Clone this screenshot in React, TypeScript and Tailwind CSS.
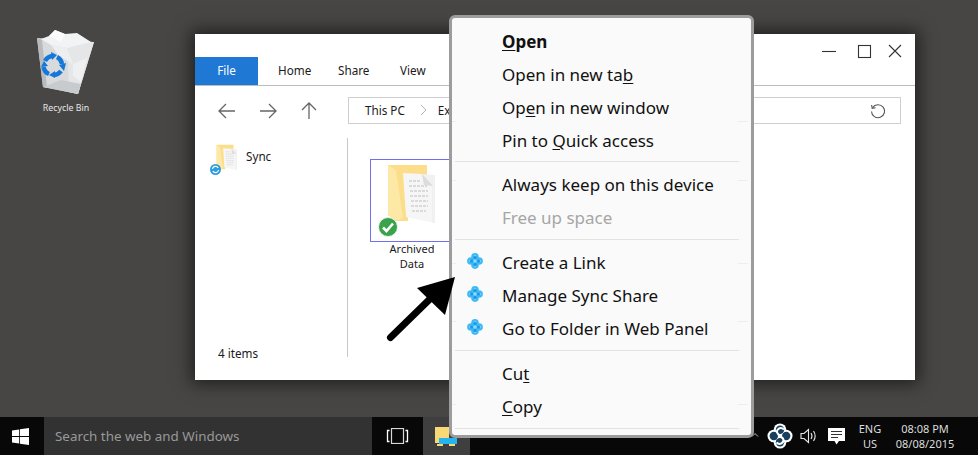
import type { ReactNode } from "react";

const font = "font-['Noto_Sans','Open_Sans',sans-serif]";

function RecycleBin() {
  return (
    <svg width="62" height="68" viewBox="0 0 62 68">
      <path d="M2 8 L59 12 L43 64 L8 57 Z" fill="#d8dadc" />
      <path d="M32 12 L59 12 L43 64 L34 62 Z" fill="#e4e6e7" />
      <path d="M6 9 L14 6 L20 0 L30 4 L42 3 L56 12 L32 18 L16 15 Z" fill="#f2f3f4" />
      <path d="M20 0 L30 4 L26 12 L14 6 Z" fill="#fbfbfb" />
      <path d="M16 15 L32 18 L38 34 L24 26 Z" fill="#eceeef" />
      <path d="M38 34 L52 28 L46 52 L38 46 Z" fill="#eff0f1" />
      <path d="M2 8 L8 57 L12 58 L7 10 Z" fill="#b7bbbe" />
      <path d="M8 57 L43 64 L46 54 L26 50 Z" fill="#c8cbcd" />
      <g fill="none" stroke="#1478d8" strokeWidth="4.4">
        <path d="M10 31 A 9.5 9.5 0 0 1 18 26" />
        <path d="M22 27 A 9.5 9.5 0 0 1 27 34" />
        <path d="M26 41 A 9.5 9.5 0 0 1 19 45" />
        <path d="M14 44 A 9.5 9.5 0 0 1 8.5 37" />
      </g>
      <path d="M16 22 L22 25 L17 30 Z M24 35 L31 33 L29 41 Z M20 41 L20 48 L14 45 Z M6 37 L13 36 L9 31 Z" fill="#1478d8" />
    </svg>
  );
}

function Folder({ size }: { size: number }) {
  return (
    <svg width={size} height={size} viewBox="0 0 60 60" className="shrink-0">
      <path d="M6 2 H45 V14 H24 L26 58 H14 L6 52 Z" fill="#fbdd8a" />
      <path d="M6 2 L14 7 L21 55 L14 58 L6 52 Z" fill="#fde8a6" />
      <path d="M21 10 L40 11 L53 24 V60 L24 54 Z" fill="#f6f6f6" />
      <path d="M40 11 L53 12 V60 L50 60 V24 Z" fill="#f1f1f1" />
      <path d="M40 11 L51 23 L42 22 Z" fill="#dcdcdc" />
      <path d="M27 18 H39 M27 23 H45 M28 28 H46 M28 33 H46 M29 38 H46 M29 43 H46 M30 48 H44" stroke="#dadada" strokeWidth="2" strokeDasharray="3 1" />
    </svg>
  );
}

function SyncMark() {
  return (
    <svg width="16" height="16" viewBox="0 0 16 16">
      <circle cx="8" cy="3.9" r="3.8" fill="#3fbaf5" />
      <circle cx="8" cy="12.1" r="3.8" fill="#3fbaf5" />
      <circle cx="3.9" cy="8" r="3.8" fill="#3fbaf5" />
      <circle cx="12.1" cy="8" r="3.8" fill="#3fbaf5" />
      <path d="M8 2 V14 M2 8 H14" stroke="#a5e2fb" strokeWidth="1" />
      <circle cx="8" cy="4.6" r="1.6" fill="#1a97e8" />
      <circle cx="8" cy="11.4" r="1.6" fill="#1a97e8" />
      <circle cx="4.6" cy="8" r="1.6" fill="#1a97e8" />
      <circle cx="11.4" cy="8" r="1.6" fill="#1a97e8" />
    </svg>
  );
}

function TrayLogo() {
  return (
    <svg width="26" height="26" viewBox="0 0 26 26">
      <g fill="white">
        <circle cx="13" cy="6.8" r="6.3" />
        <circle cx="13" cy="19.2" r="6.3" />
        <circle cx="6.8" cy="13" r="6.3" />
        <circle cx="19.2" cy="13" r="6.3" />
      </g>
      <g fill="#17405f">
        <circle cx="13" cy="6.8" r="4.2" />
        <circle cx="13" cy="19.2" r="4.2" />
        <circle cx="6.8" cy="13" r="4.2" />
        <circle cx="19.2" cy="13" r="4.2" />
      </g>
      <path d="M17 6.5 C 13 3 8 7 11 11 L 16 15.5 C 18 19 13 23 9.5 19.5" fill="none" stroke="white" strokeWidth="2" />
    </svg>
  );
}

function NavArrow({ d }: { d: string }) {
  return (
    <svg width="18" height="18" viewBox="0 0 18 18" fill="none" stroke="#666666" strokeWidth="1.3">
      <path d={d} />
    </svg>
  );
}

function MenuRow({ children, icon, muted }: { children: ReactNode; icon?: boolean; muted?: boolean }) {
  return (
    <div className={`flex h-[33px] items-center text-[17px] ${muted ? "text-[#a6a6a6]" : "text-[#111]"}`}>
      <div className="flex w-[50px] shrink-0 pl-[15px]">
        {icon && (
          <div className="-mt-[4px]">
            <SyncMark />
          </div>
        )}
      </div>
      <span className="whitespace-pre">{children}</span>
    </div>
  );
}

function MenuLine() {
  return <div className="mt-[4px] mb-[6px] ml-[3px] h-px w-[284px] bg-[#e3e3e3]" />;
}

function ContextMenu() {
  const ticks = [103, 162, 245, 303, 386];
  return (
    <div className="absolute top-[15px] left-[449px] h-[423px] w-[305px] rounded-[6px] border-[3px] border-[#9c9c9c] bg-[#fafafa] pt-[7px]">
      {ticks.map((y) => (
        <div key={y} className="absolute right-[3px] left-0 h-px" style={{ top: y }}>
          <div className="absolute left-0 h-px w-[4px] bg-[#eeeeee]" />
          <div className="absolute right-0 h-px w-[10px] bg-[#eeeeee]" />
        </div>
      ))}
      <MenuRow>
        <b className="font-bold">
          <u className="underline-offset-2">O</u>pen
        </b>
      </MenuRow>
      <MenuRow>
        Open in new ta<u className="underline-offset-2">b</u>
      </MenuRow>
      <MenuRow>
        Op<u className="underline-offset-2">e</u>n in new window
      </MenuRow>
      <MenuRow>
        Pin to <u className="underline-offset-2">Q</u>uick access
      </MenuRow>
      <MenuLine />
      <MenuRow>Always keep on this device</MenuRow>
      <MenuRow muted>Free up space</MenuRow>
      <div className="mt-[5px] mb-[6px] ml-[3px] h-px w-[284px] bg-[#e3e3e3]" />
      <MenuRow icon>Create a Link</MenuRow>
      <MenuRow icon>Manage Sync Share</MenuRow>
      <MenuRow icon>Go to Folder in Web Panel</MenuRow>
      <div className="mt-[5px] mb-[6px] ml-[3px] h-px w-[284px] bg-[#e3e3e3]" />
      <MenuRow>
        Cu<u className="underline-offset-2">t</u>
      </MenuRow>
      <MenuRow>
        <u className="underline-offset-2">C</u>opy
      </MenuRow>
      <div className="mt-[5px] ml-[3px] h-px w-[284px] bg-[#e3e3e3]" />
    </div>
  );
}

function ExplorerWindow() {
  return (
    <div className="absolute top-[34px] left-[195px] flex h-[346px] w-[720px] flex-col bg-white text-[11.7px] text-[#1a1a1a] shadow-[0_0_16px_4px_rgba(0,0,0,0.55)]">
      <div className="flex h-[23px] items-start justify-end">
        <svg width="100" height="26" viewBox="0 0 100 26" fill="none" stroke="#333333" strokeWidth="1.1" className="mr-[4px] shrink-0">
          <path d="M11 17.5 H25" />
          <rect x="47.5" y="11.5" width="12" height="12" />
          <path d="M78 11 L90 23 M90 11 L78 23" />
        </svg>
      </div>
      <div className="flex h-[29px] items-center border-b border-[#bcbcbc]">
        <div className="flex h-full w-[63px] items-center justify-center bg-[#1e78d4] text-white">File</div>
        <div className="ml-[20px] w-[60px]">Home</div>
        <div className="w-[62px]">Share</div>
        <div>View</div>
      </div>
      <div className="flex h-[52px] items-start pt-[11px]">
        <div className="flex h-[27px] w-[153px] items-center gap-[23px] pl-[23px]">
          <NavArrow d="M17 9 H1 M8 2 L1 9 L8 16" />
          <NavArrow d="M1 9 H17 M10 2 L17 9 L10 16" />
          <NavArrow d="M9 17 V1 M2 8 L9 1 L16 8" />
        </div>
        <div className="flex h-[27px] w-[553px] items-center justify-between border border-[#cfcfcf] pr-[14px] pl-[16px]">
          <div className="flex items-center">
            <span>This PC</span>
            <svg width="8" height="12" viewBox="0 0 8 12" fill="none" stroke="#b5b5b5" className="mr-[10px] ml-[15px]">
              <path d="M1 1 L6 6 L1 11" />
            </svg>
            <span>Explorer</span>
          </div>
          <svg width="16" height="16" viewBox="0 0 16 16" fill="none" stroke="#555555" strokeWidth="1.1">
            <path d="M2.6 4.6 A 6.5 6.5 0 1 1 1.5 8.5" />
            <path d="M1.6 2 L2.2 5.4 L5.6 4.8" />
          </svg>
        </div>
      </div>
      <div className="flex h-[219px]">
        <div className="flex w-[153px] flex-col justify-between border-r border-[#c8c8c8]">
          <div className="relative mt-[6px] ml-[19px] flex h-[26px] items-center gap-[6px]">
            <Folder size={26} />
            <span>Sync</span>
            <svg width="11" height="11" viewBox="0 0 11 11" fill="none" className="absolute top-[20px] -left-[4px]">
              <circle cx="5.5" cy="5.5" r="5.5" fill="#2e9ddb" />
              <path d="M2.4 5 A 3.2 3.2 0 0 1 8.2 3.8 M8.6 6 A 3.2 3.2 0 0 1 2.8 7.2" stroke="white" strokeWidth="1.2" />
            </svg>
          </div>
          <div className="mb-[-5px] ml-[23px] h-[18px] leading-[18px]">4 items</div>
        </div>
        <div className="ml-[22px] w-[84px] pt-[21px]">
          <div className="relative flex h-[83px] justify-center border border-[#6f6ff0] pt-[3px]">
            <Folder size={60} />
            <div className="absolute bottom-[4px] left-[7px] flex h-[20px] w-[20px] items-center justify-center rounded-full border border-[#e8f3e8] bg-[#3aa24a]">
              <svg width="14" height="14" viewBox="0 0 14 14" fill="none" stroke="white" strokeWidth="2.6">
                <path d="M2 7.5 L5.5 11 L12 3.5" />
              </svg>
            </div>
          </div>
          <div className="-mt-[1px] text-center text-[11px] leading-[15px]">
            Archived
            <br />
            Data
          </div>
        </div>
      </div>
    </div>
  );
}

function Taskbar() {
  return (
    <div className="flex h-[38px] shrink-0 items-center bg-[#080808]">
      <div className="flex h-full w-[44px] shrink-0 items-center pl-[12px]">
        <svg width="17" height="17" viewBox="0 0 17 17" fill="white">
          <path d="M0 2.4 L7.2 1.4 V8 H0 Z M8 1.3 L17 0 V8 H8 Z M0 9 H7.2 V15.6 L0 14.6 Z M8 9 H17 V17 L8 15.7 Z" />
        </svg>
      </div>
      <div className="flex h-full w-[328px] shrink-0 items-center bg-[#323232] pl-[11px] text-[13.4px] text-[#999999]">
        Search the web and Windows
      </div>
      <div className="flex h-full w-[51px] shrink-0 items-center justify-center">
        <svg width="23" height="16" viewBox="0 0 23 16" fill="none" stroke="white">
          <rect x="5.5" y="0.5" width="12" height="15" strokeWidth="1.2" stroke="#d8d8d8" />
          <path d="M3.5 2.5 H1.5 V13.5 H3.5 M19.5 2.5 H21.5 V13.5 H19.5" strokeWidth="1.3" />
        </svg>
      </div>
      <div className="flex h-full w-[47px] shrink-0 items-center bg-[#3f3f3f] pl-[12px]">
        <svg width="22" height="20" viewBox="0 0 22 20">
          <path d="M0 1 H14 V17 H0 Z" fill="#f9d976" />
          <path d="M4 12 H22 V18 H4 Z" fill="#27b4ee" />
          <path d="M2 18 H8 V20 H2 Z M14 18 H20 V20 H14 Z" fill="#f9d976" />
        </svg>
      </div>
      <div className="ml-auto flex h-full items-center text-[11px] leading-[15px] text-[#dddddd]">
        <svg width="8" height="5" viewBox="0 0 8 5" fill="none" stroke="#bbbbbb" className="mr-[8px] -mt-[3px]">
          <path d="M1 4.5 L4 1.5 L7 4.5" />
        </svg>
        <TrayLogo />
        <svg width="18" height="16" viewBox="0 0 18 16" fill="none" stroke="#e6e6e6" strokeWidth="1.1" className="ml-[7px]">
          <path d="M1 5.5 H4 L8.5 1.5 V14.5 L4 10.5 H1 Z" />
          <path d="M11 5 C 12.2 6.8 12.2 9.2 11 11 M13.5 3 C 15.5 6 15.5 10 13.5 13 " />
        </svg>
        <svg width="17" height="17" viewBox="0 0 17 17" className="ml-[10px]">
          <path d="M0 0 H17 V13 H11 L8.5 16.5 L6.5 13 H0 Z" fill="white" />
          <path d="M3 3.5 H14 M3 6.5 H14 M3 9.5 H10" stroke="#333333" />
        </svg>
        <div className="ml-[13px] w-[24px] text-center">
          ENG
          <br />
          US
        </div>
        <div className="mr-[17px] ml-[7px] w-[72px] text-center">
          08:08 PM
          <br />
          08/08/2015
        </div>
      </div>
    </div>
  );
}

export default function App() {
  return (
    <div className={`${font} relative flex h-[455px] w-[978px] flex-col overflow-hidden bg-[#474644]`}>
      <div className="relative flex-1">
        <div className="absolute top-[30px] left-[35px] flex w-[62px] flex-col items-center">
          <RecycleBin />
          <div className="mt-[3px] text-[8.8px] leading-[14px] whitespace-nowrap text-[#e8e8e8]">Recycle Bin</div>
        </div>
        <ExplorerWindow />
      </div>
      <Taskbar />
      <ContextMenu />
      <svg width="80" height="80" viewBox="0 0 80 80" className="absolute top-[270px] left-[380px]">
        <path d="M37 18 L75 7 L65 45 Z" fill="#000000" />
        <path d="M10.5 67.5 L52 27" stroke="#000000" strokeWidth="7" strokeLinecap="round" />
      </svg>
    </div>
  );
}
